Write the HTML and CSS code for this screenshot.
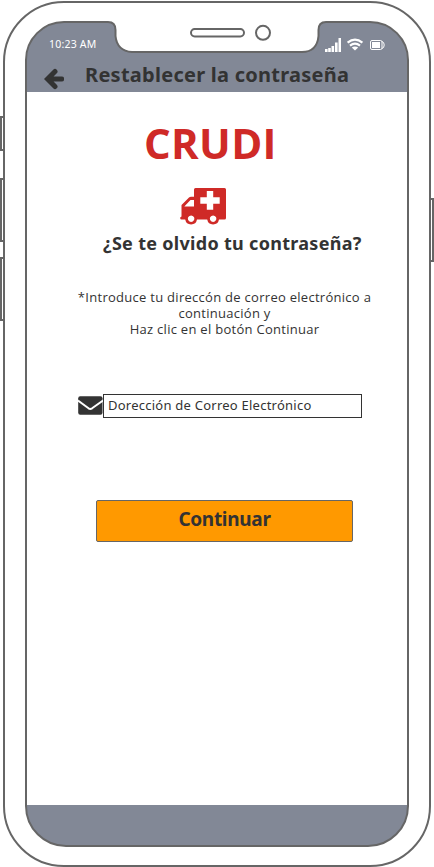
FILE: index.html
```
<!DOCTYPE html>
<html lang="es">
<head>
<meta charset="utf-8">
<title>Restablecer la contraseña</title>
<link rel="stylesheet" href="styles.css">
</head>
<body>
<div class="phone">
  <main class="screen">
    <header class="top">
      <div class="status">
        <span class="time">10:23 AM</span>
        <svg class="signals" width="62" height="16" viewBox="324 37 62 16" fill="#fff">
          <path d="M325 49h2.600v3H325zM328.200 48h2.600v4h-2.600zM331.500 46h2.600v6h-2.600zM335 42.500h2.600v9.500H335zM338.500 38h2.500v14h-2.500z"/>
          <g fill="none" stroke="#fff" stroke-width="2.200"><path d="M347.600 42.700q7.400-6 14.800 0M350 45.700q5-4 10 0"/></g>
          <path d="M351.800 47.600q3.200-2.200 6.400 0L355 50.600z"/>
          <rect x="370.500" y="40.500" width="11.500" height="9" rx="1.500" fill="none" stroke="#fff"/>
          <path d="M372 42h8v6h-8z"/><path d="M382 41.500q2.200.5 2.200 3.500t-2.200 3.500" fill="none" stroke="#fff"/>
        </svg>
      </div>
      <div class="titlebar">
        <svg class="back" width="20" height="22" viewBox="0 0 20 22"><path d="M11 3.500L3.500 11L11 18.500M4.500 11H17.700" fill="none" stroke="#333" stroke-width="5" stroke-linecap="round" stroke-linejoin="miter"/></svg>
        <h1 class="title">Restablecer la contraseña</h1>
      </div>
    </header>
    <section class="content">
      <div class="brand">CRUDI</div>
      <svg class="ambulance" width="46" height="38" viewBox="180 187 46 38">
        <path fill="#cf2a27" fill-rule="evenodd" d="M195.500 188H224.500q1.500 0 1.500 1.500V218q0 1.500-1.500 1.500H219a6 6 0 0 1-11.800 0H197a6 6 0 0 1-11.800 0H181.500q-1.500 0-1.300-2l1.300-1V205l7.500-7.500q.8-.7 2-.7H194V189.500q0-1.500 1.500-1.500zM184.300 206.500H194V200H190.500zM206.800 191v6.300h-6.500v6.400h6.500v6.100h6.400v-6.100h6.500v-6.400h-6.500V191zM191.100 215.500a3.200 3.200 0 1 0 .01 0zM213.100 215.500a3.200 3.200 0 1 0 .01 0z"/>
      </svg>
      <h2 class="question">¿Se te olvido tu contraseña?</h2>
      <p class="hint">*Introduce tu direccón de correo electrónico a<br>continuación y<br>Haz clic en el botón Continuar</p>
      <div class="field">
        <svg width="25" height="19" viewBox="0 0 25 19"><rect x=".2" y=".2" width="24.300" height="18.600" rx="2" fill="#333"/><path d="M0 4.500L10.500 12.300q1.800 1.200 3.600 0L25 4.500" fill="none" stroke="#fff" stroke-width="2"/></svg>
        <div class="input">Dorección de Correo Electrónico</div>
      </div>
      <button class="continue" type="button">Continuar</button>
    </section>
    <footer class="bottom"></footer>
  </main>
  <svg class="frame" width="434" height="867" viewBox="0 0 434 867" fill="none" stroke="#666" stroke-width="2">
    <path fill="#fff" fill-rule="evenodd" d="M64 2H370A60 60 0 0 1 430 62V806A60 60 0 0 1 370 866H64A60 60 0 0 1 4 806V62A60 60 0 0 1 64 2zM64 22A38 38 0 0 0 26 60V806A40 40 0 0 0 66 846H368A40 40 0 0 0 408 806V60A38 38 0 0 0 370 22H326Q318.500 22 318.500 30V36Q317 52 302 52H132Q117 51 115.500 36V30Q115.500 22 108 22z"/>
    <rect x="191" y="29" width="53" height="7.500" rx="3.700"/>
    <circle cx="263" cy="32.800" r="7"/>
    <path d="M4 117H1V150H4M4 179H1V241H4M4 258H1V320H4M430 199H433V261H430"/>
  </svg>
</div>
</body>
</html>
```
FILE: styles.css
```
* { box-sizing: border-box; }
body { margin: 0; background: #fff; font-family: "Noto Sans", "Open Sans", sans-serif; color: #333; overflow: hidden; }
.phone { position: relative; width: 434px; height: 867px; padding: 22px 26px 21px; overflow: hidden; }
.screen { display: flex; flex-direction: column; height: 824px; border-radius: 38px 38px 40px 40px; overflow: hidden; }
.frame { position: absolute; left: 0; top: 0; pointer-events: none; }
.top { height: 70px; background: #828896; }
.status { display: flex; justify-content: space-between; padding: 15px 22px 0 23px; height: 38px; }
.time { margin-top: -1px; font-size: 10.5px; line-height: 16px; letter-spacing: .2px; color: #fff; white-space: nowrap; }
.titlebar { display: flex; padding-left: 18px; }
.back { margin-top: 8px; }
.title { margin: 1px 0 0 21px; font-size: 20px; line-height: 28px; font-weight: 700; letter-spacing: .26px; white-space: nowrap; }
.content { flex: 1; display: flex; flex-direction: column; align-items: flex-start; background: #fff; }
.brand { margin: 22px 0 0 118px; font-family: "Open Sans", sans-serif; font-size: 42px; line-height: 57px; font-weight: 700; letter-spacing: .3px; color: #cf2a27; }
.ambulance { margin: 16px 0 0 154px; }
.question { margin: 5px 0 0 77px; font-size: 18px; line-height: 26px; font-weight: 700; letter-spacing: .3px; white-space: nowrap; }
.hint { margin: 33px 0 0 44px; width: 309px; font-family: "Open Sans", sans-serif; font-size: 13px; line-height: 16px; letter-spacing: .28px; text-align: center; white-space: nowrap; }
.field { display: flex; align-items: flex-start; margin: 57px 0 0 52px; }
.field svg { margin-top: 2px; }
.input { width: 259px; height: 24px; padding-left: 4px; border: 1px solid #333; font-size: 13px; line-height: 21px; letter-spacing: .24px; white-space: nowrap; }
.continue { width: 257px; height: 42px; margin: 82px 0 0 70px; padding: 0 0 4px; border: 1px solid #666; border-radius: 2px; background: #f90; color: #333; font: 700 19px/36px "Noto Sans", sans-serif; letter-spacing: -.3px; }
.bottom { height: 41px; background: #828896; }
```
